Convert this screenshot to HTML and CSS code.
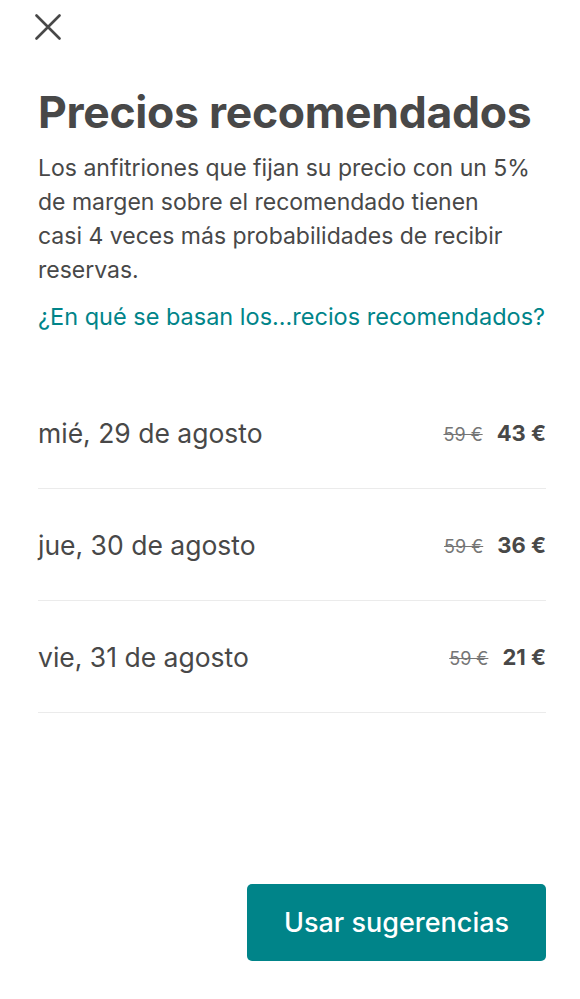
FILE: index.html
```html
<!DOCTYPE html>
<html lang="es">
<head>
    <meta charset="UTF-8">
    <meta name="viewport" content="width=device-width, initial-scale=1.0">
    <title>Precios recomendados</title>
    <link rel="stylesheet" href="styles.css">
</head>
<body>
    <div class="screen">
        <button class="close" aria-label="Cerrar">
            <svg width="26" height="26" viewBox="0 0 26 26">
                <path d="M1.5 1.5 L24.5 24.5 M24.5 1.5 L1.5 24.5" stroke="#484848" stroke-width="2.6" stroke-linecap="round" fill="none"/>
            </svg>
        </button>
        <h1>Precios recomendados</h1>
        <p class="intro">Los anfitriones que fijan su precio con un 5% de margen sobre el recomendado tienen casi&nbsp;4 veces más probabilidades de recibir reservas.</p>
        <a class="info-link" href="#">¿En qué se basan los...recios recomendados?</a>

        <div class="days">
            <div class="day">
                <span class="date">mié, 29 de agosto</span>
                <span class="prices"><s>59 €</s><strong>43 €</strong></span>
            </div>
            <div class="day">
                <span class="date">jue, 30 de agosto</span>
                <span class="prices"><s>59 €</s><strong>36 €</strong></span>
            </div>
            <div class="day">
                <span class="date">vie, 31 de agosto</span>
                <span class="prices"><s>59 €</s><strong>21 €</strong></span>
            </div>
        </div>

        <div class="footer">
            <button class="apply">Usar sugerencias</button>
        </div>
    </div>
</body>
</html>
```

FILE: styles.css
```css
body {
    margin: 0;
    font-family: Inter, "Noto Sans", sans-serif;
    color: #484848;
    background: #ffffff;
}
.screen {
    display: flex;
    flex-direction: column;
    align-items: flex-start;
    min-height: 100vh;
    box-sizing: border-box;
    padding: 0 34px 38px 38px;
}
.close {
    background: none;
    border: none;
    padding: 0;
    margin: 14px 0 0 -3px;
    width: 26px;
    height: 26px;
    cursor: pointer;
}
.close svg {
    display: block;
}
h1 {
    margin: 46px 0 0;
    font-size: 44.5px;
    font-weight: 700;
    line-height: 52px;
    letter-spacing: -0.3px;
}
.intro {
    margin: 13px 0 0;
    font-size: 23px;
    line-height: 34px;
}
.info-link {
    margin-top: 15px;
    color: #008489;
    text-decoration: none;
    font-size: 23.5px;
    line-height: 30px;
}
.days {
    align-self: stretch;
    margin-top: 45px;
}
.day {
    display: flex;
    justify-content: space-between;
    align-items: center;
    height: 111px;
    border-bottom: 1px solid #ebebeb;
}
.date {
    font-size: 26.5px;
}
.prices {
    display: flex;
    align-items: baseline;
    gap: 14px;
}
.prices s {
    color: #767676;
    font-size: 18px;
}
.prices strong {
    font-weight: 700;
    font-size: 22px;
}
.footer {
    align-self: stretch;
    margin-top: auto;
    display: flex;
    justify-content: flex-end;
}
.apply {
    width: 299px;
    height: 77px;
    border: none;
    border-radius: 5px;
    background: #008489;
    color: #ffffff;
    font-family: inherit;
    font-size: 27px;
    font-weight: 500;
    cursor: pointer;
}
```
